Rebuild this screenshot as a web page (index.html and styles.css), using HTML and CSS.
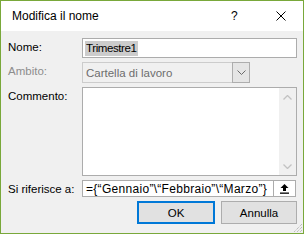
FILE: index.html
```html
<!DOCTYPE html>
<html lang="it">
<head>
<meta charset="utf-8">
<link rel="stylesheet" href="styles.css">
</head>
<body>
<div class="win">
  <div class="titlebar">
    <span class="title">Modifica il nome</span>
    <span class="help">?</span>
    <span class="close"><svg width="10" height="10" viewBox="0 0 10 10"><path d="M0.5 0.5L9.5 9.5M9.5 0.5L0.5 9.5" stroke="#000" stroke-width="1" fill="none"/></svg></span>
  </div>
  <div class="body">
    <div class="row r-nome">
      <span class="lbl">Nome:</span>
      <div class="edit nome"><span class="sel">Trimestre1</span></div>
    </div>
    <div class="row r-ambito">
      <span class="lbl dis">Ambito:</span>
      <div class="combo">
        <span class="ctext">Cartella di lavoro</span>
        <span class="cbtn"><svg width="9" height="5" viewBox="0 0 9 5"><path d="M0.5 0.5L4.5 4.5L8.5 0.5" stroke="#6a6a6a" stroke-width="1" fill="none"/></svg></span>
      </div>
    </div>
    <div class="row r-comm">
      <span class="lbl">Commento:</span>
      <div class="textarea">
        <div class="sb">
          <svg width="9" height="5" viewBox="0 0 9 5"><path d="M0.5 4.5L4.5 0.5L8.5 4.5" stroke="#c2c2c2" stroke-width="1.3" fill="none"/></svg>
          <svg width="9" height="5" viewBox="0 0 9 5"><path d="M0.5 0.5L4.5 4.5L8.5 0.5" stroke="#c2c2c2" stroke-width="1.3" fill="none"/></svg>
        </div>
      </div>
    </div>
    <div class="row r-ref">
      <span class="lbl">Si riferisce a:</span>
      <div class="refwrap">
        <div class="edit ref">={“Gennaio”\“Febbraio”\“Marzo”}</div>
        <div class="refbtn"><svg width="11" height="11" viewBox="0 0 11 11"><path d="M5.5 1L1.5 5H4V8H7V5H9.5Z" fill="#000"/><rect x="1" y="9.5" width="9" height="1.3" fill="#000"/></svg></div>
      </div>
    </div>
    <div class="buttons">
      <div class="btn ok">OK</div>
      <div class="btn">Annulla</div>
    </div>
  </div>
  <svg class="grip" width="10" height="10" viewBox="0 0 10 10"><path d="M9 1L1 9M9 4L4 9M9 7L7 9" stroke="#a8a8a8" stroke-width="1" stroke-dasharray="1 1" fill="none"/></svg>
</div>
</body>
</html>
```
FILE: styles.css
```css
html, body {
  margin: 0;
  padding: 0;
  background: #fff;
}
.win {
  position: relative;
  width: 304px;
  height: 234px;
  box-sizing: border-box;
  border: 1px solid #79a83a;
  background: #f0f0f0;
  font-family: "Liberation Sans", Arial, sans-serif;
  font-size: 11.5px;
  color: #000;
  display: flex;
  flex-direction: column;
}
.titlebar {
  height: 30px;
  background: #fff;
  display: flex;
  align-items: center;
  flex: none;
}
.title {
  font-size: 12px;
  margin-left: 11px;
  flex: 1;
  padding-bottom: 1px;
}
.help {
  font-size: 12px;
  width: 12px;
  margin-right: 33px;
  padding-bottom: 1px;
}
.close {
  width: 10px;
  height: 10px;
  margin-right: 17px;
  display: flex;
}
.body {
  padding: 7px 6px 0 7px;
  display: flex;
  flex-direction: column;
}
.row {
  display: grid;
  grid-template-columns: 74px 1fr;
}
.lbl {
  padding-top: 3px;
  line-height: 13px;
}
.lbl.dis {
  color: #8d8d8d;
}
.edit {
  box-sizing: border-box;
  background: #fff;
  border: 1px solid #acacac;
  display: flex;
  align-items: center;
  white-space: nowrap;
  overflow: hidden;
}
.nome {
  height: 20px;
  padding-left: 2px;
}
.sel {
  background: #cccccc;
  padding: 1px 1px;
  line-height: 13px;
  letter-spacing: -0.4px;
}
.r-ambito {
  margin-top: 4px;
}
.combo {
  box-sizing: border-box;
  width: 168px;
  height: 21px;
  border: 1px solid #cccccc;
  background: #f0f0f0;
  display: flex;
  align-items: center;
}
.ctext {
  flex: 1;
  padding-left: 3px;
  color: #6d6d6d;
}
.cbtn {
  box-sizing: border-box;
  width: 18px;
  height: 21px;
  margin: -1px -1px -1px 0;
  border: 1px solid #adadad;
  background: #e5e5e5;
  display: flex;
  align-items: center;
  justify-content: center;
}
.r-comm {
  margin-top: 4px;
}
.textarea {
  box-sizing: border-box;
  height: 89px;
  border: 1px solid #acacac;
  background: #fff;
  display: flex;
  justify-content: flex-end;
}
.sb {
  width: 17px;
  background: #f0f0f0;
  display: flex;
  flex-direction: column;
  justify-content: space-between;
  align-items: center;
  padding: 7px 0 6px;
}
.r-ref {
  margin-top: 4px;
}
.refwrap {
  display: flex;
}
.ref {
  width: 192px;
  height: 17px;
  padding-left: 3px;
  flex: none;
  font-size: 12px;
  letter-spacing: 0.3px;
}
.refbtn {
  box-sizing: border-box;
  width: 22px;
  height: 17px;
  border: 1px solid #acacac;
  border-left: none;
  background: #fff;
  display: flex;
  align-items: center;
  justify-content: center;
}
.buttons {
  display: flex;
  justify-content: flex-end;
  gap: 6px;
  margin-top: 4px;
}
.btn {
  box-sizing: border-box;
  width: 76px;
  height: 23px;
  border: 1px solid #adadad;
  background: #e1e1e1;
  display: flex;
  align-items: center;
  justify-content: center;
}
.btn.ok {
  width: 78px;
  border: 2px solid #0078d7;
}
.grip {
  position: absolute;
  right: 0;
  bottom: 0;
}
```
